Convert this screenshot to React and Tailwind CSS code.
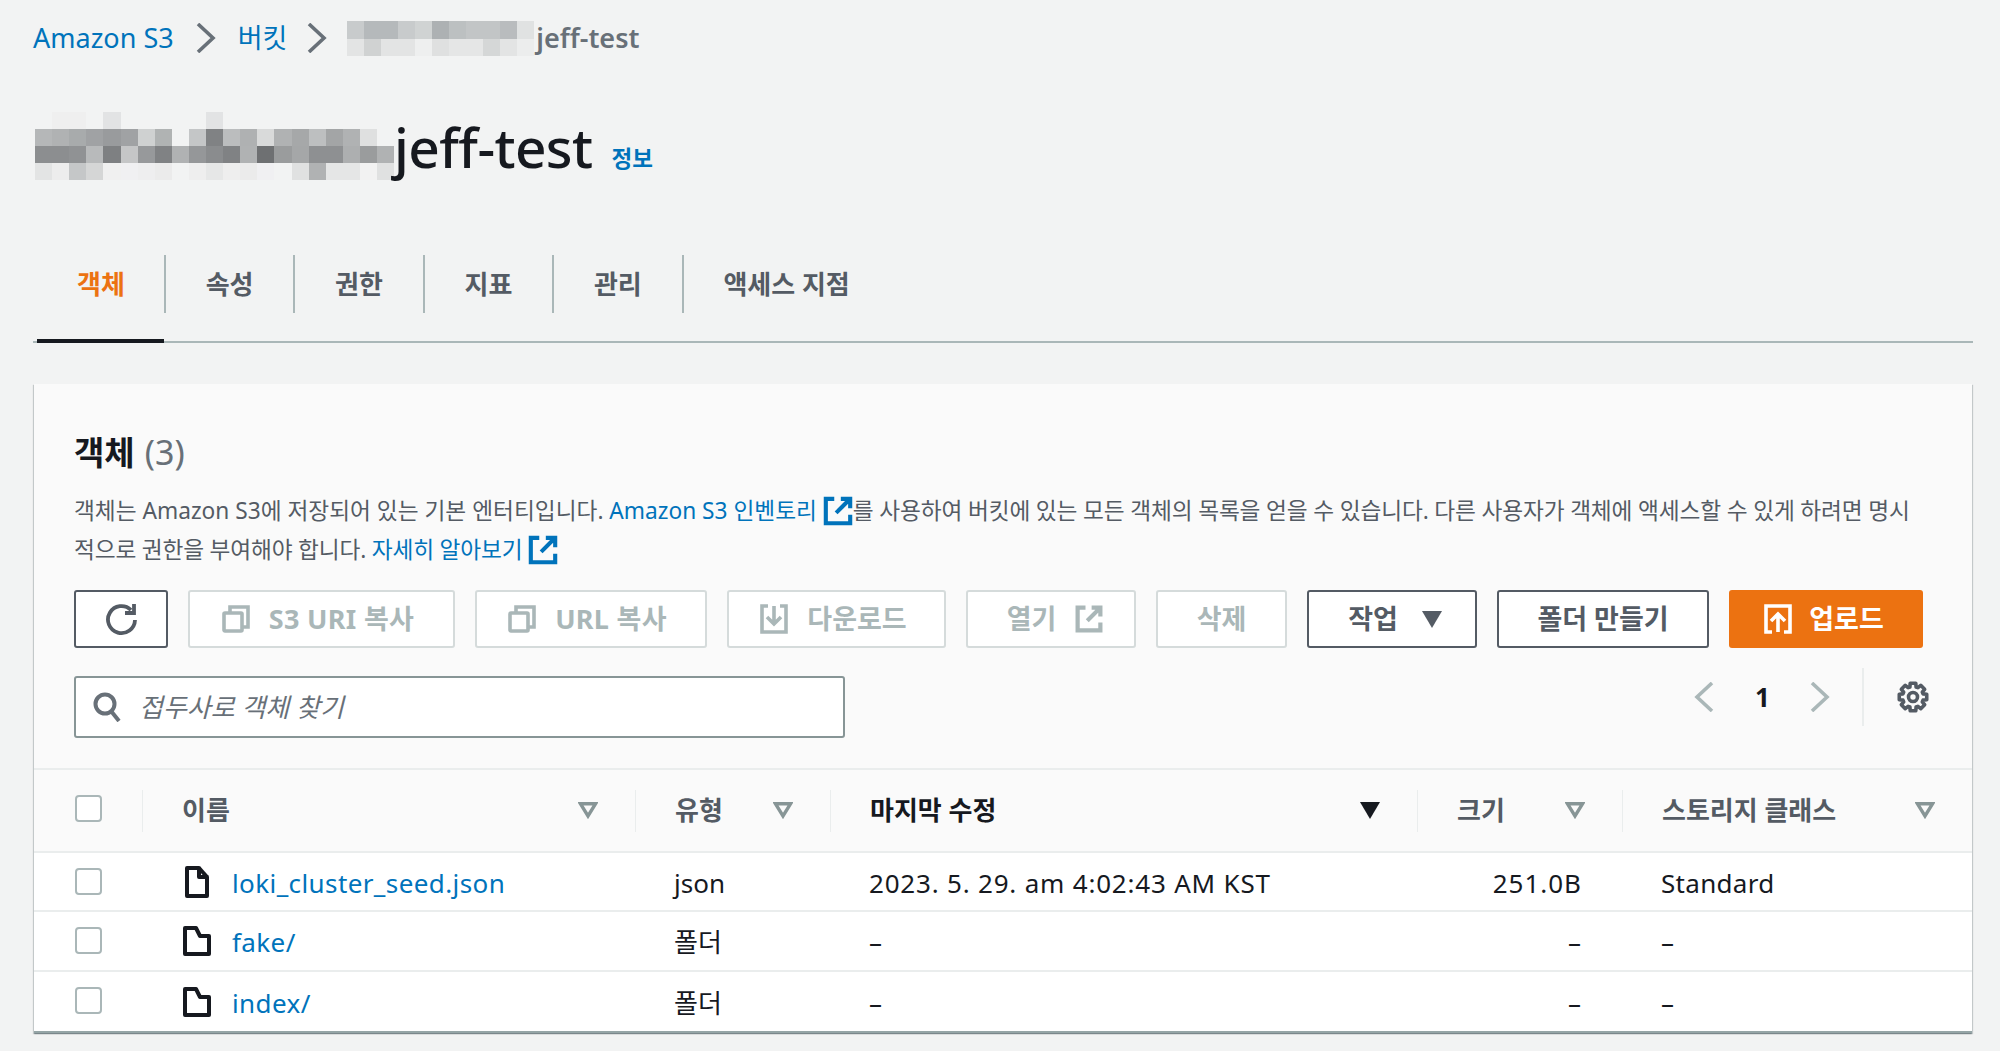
import React from 'react';

const crumbMosaic = [
  ['#c8cbcc', '#b5b9bb', '#b5b9bb', '#c8cbcc', '#d0d3d3', '#adb1b3', '#bcc0c1', '#c2c5c6', '#c2c5c6', '#b9bcbe', '#e0e2e2'],
  ['#e3e4e4', '#d0d2d2', '#e3e4e4', '#e3e4e4', '#eeefef', '#dfe0e0', '#e5e6e6', '#e5e6e6', '#d5d7d7', '#e3e4e4', '#eceded'],
];

const titleMosaic = [
  [null, '#efefef', '#efefef', null, '#e2e3e4', null, null, null, null, null, '#e2e3e4'],
  ['#b5b7b8', '#b0b2b3', '#a8abac', '#a0a2a4', '#999b9d', '#a0a2a4', '#cfd1d1', '#b0b3b3', null, '#c4c6c7', '#808284', '#bbbdbe', '#afb1b2', '#d9dada', '#b0b2b3', '#a6a8a9', '#bdbfc0', '#a3a5a6', '#b0b2b3', '#dfe0e0'],
  ['#8c8e90', '#8c8e90', '#909294', '#b8babb', '#7e8082', '#c5c6c7', '#97999b', '#808284', '#b0b2b3', '#959799', '#8a8c8e', '#808284', '#b0b2b3', '#6e7072', '#9a9c9d', '#a5a7a8', '#8e9092', '#8e9092', '#adafb0', '#9a9c9d', '#b0b2b3'],
  ['#e3e4e4', '#ededed', '#c5c7c8', '#d5d6d6', '#f0f0f0', '#f0f0f2', '#eeeeef', '#ebebeb', null, '#eeeeee', '#e6e7e7', '#eeeeee', '#ebebeb', '#f0f0f2', null, '#e0e1e1', '#b0b2b3', '#e5e6e6', '#e5e6e6', '#f2f2f2', '#e0e1e1'],
];

// redacted part of the bucket name, drawn as blocks
const Mosaic = ({ rows, cell, rowH, className }) => (
  <svg
    className={className}
    width={rows[rows.length - 1].length * cell}
    height={rows.length * rowH}
    shapeRendering="crispEdges"
  >
    {rows.map((row, y) =>
      row.map((c, x) =>
        c ? <rect key={`${x}-${y}`} x={x * cell} y={y * rowH} width={cell} height={rowH} fill={c} /> : null
      )
    )}
  </svg>
);

const Chevron = ({ left, color = '#687078', className }) => (
  <svg className={className} width="20" height="30" viewBox="0 0 20 30" fill="none" stroke={color} strokeWidth="3.6">
    <path d={left ? 'M18 1 3 15l15 14' : 'M2 1l15 14L2 29'} />
  </svg>
);

const ExternalIcon = ({ size = 30, color = '#0073bb', width = 2.2 }) => (
  <svg width={size} height={size} viewBox="0 0 16 16" fill="none" stroke={color} strokeWidth={width} className="shrink-0 inline-block align-[-7px]">
    <path d="M6 1.5H1.5v13h13V10" />
    <path d="M9.5 1.5h5v5M14.5 1.5 7 9" />
  </svg>
);

const CopyIcon = () => (
  <svg width="28" height="28" viewBox="0 0 28 28" fill="none" stroke="#aab7b8" strokeWidth="3.6" className="shrink-0">
    <path d="M8 7V2h18v20h-6" />
    <rect x="2" y="8" width="18" height="18" rx="1" />
  </svg>
);

const DownloadIcon = () => (
  <svg width="28" height="30" viewBox="0 0 28 30" fill="none" stroke="#aab7b8" strokeWidth="3.6" className="shrink-0">
    <path d="M8 2H2v26h24V2h-6" />
    <path d="M14 2v18M7 13l7 7 7-7" />
  </svg>
);

const UploadIcon = () => (
  <svg width="28" height="30" viewBox="0 0 28 30" fill="none" stroke="#ffffff" strokeWidth="3.6" className="shrink-0">
    <path d="M8 28H2V2h24v26h-6" />
    <path d="M14 28V10M7 17l7-7 7 7" />
  </svg>
);

const RefreshIcon = () => (
  <svg width="32" height="34" viewBox="0 0 32 34" fill="none" stroke="#545b64" strokeWidth="3.8">
    <path d="M26 8a13.5 13.5 0 1 0 4 10" />
    <path d="M29 2v9H20" />
  </svg>
);

const SearchIcon = () => (
  <svg width="28" height="30" viewBox="0 0 28 30" fill="none" stroke="#687078" strokeWidth="4">
    <circle cx="12" cy="12" r="9.5" />
    <path d="M18 19l8 10" />
  </svg>
);

// eight toothed outline for the preferences icon
const gearPath = () => {
  const pts = [];
  for (let i = 0; i < 8; i++) {
    const a = (i * Math.PI) / 4;
    [[-0.3, 10.5], [-0.2, 14], [0.2, 14], [0.3, 10.5]].forEach(([da, r]) => {
      pts.push(`${(16 + r * Math.sin(a + da)).toFixed(2)} ${(16 - r * Math.cos(a + da)).toFixed(2)}`);
    });
  }
  return `M${pts.join('L')}Z`;
};

const GearIcon = ({ className }) => (
  <svg width="32" height="32" viewBox="0 0 32 32" fill="none" stroke="#545b64" strokeWidth="3.6" strokeLinejoin="round" className={className}>
    <path d={gearPath()} />
    <circle cx="16" cy="16" r="4.5" />
  </svg>
);

const FileIcon = () => (
  <div className="w-[28px] flex justify-center shrink-0">
    <svg width="24" height="32" viewBox="0 0 24 32" fill="none" stroke="#16191f" strokeWidth="4" strokeLinejoin="round">
      <path d="M2 2h12v9h8v19H2z" />
      <path d="M14 2l8 9" />
    </svg>
  </div>
);

const FolderIcon = () => (
  <svg width="28" height="30" viewBox="0 0 28 30" fill="none" stroke="#16191f" strokeWidth="4" strokeLinejoin="round" className="shrink-0">
    <path d="M2 2h11l4 8h9v18H2z" />
  </svg>
);

const SortIcon = ({ active }) => (
  <svg width="20" height="17" viewBox="0 0 20 17" className="shrink-0">
    {active ? (
      <path d="M0 0h20L10 17z" fill="#16191f" />
    ) : (
      <path d="M2.5 1.8h15L10 14z" fill="none" stroke="#879596" strokeWidth="3.4" />
    )}
  </svg>
);

const Checkbox = ({ className = '' }) => (
  <div className={`w-[27px] h-[27px] rounded-[4px] border-2 border-[#aab7b8] bg-white shrink-0 ${className}`} />
);

const gridCols = 'grid grid-cols-[108px_493px_195px_587px_205px_1fr]';

const HeaderCell = ({ label, active, divider = true }) => (
  <div className={`h-[42px] flex items-center justify-between pl-[39px] pr-[37px] ${divider ? 'border-l border-[#eaeded]' : ''}`}>
    <span className={`text-[26px] font-semibold ${active ? 'text-[#16191f]' : 'text-[#545b64]'}`}>{label}</span>
    <SortIcon active={active} />
  </div>
);

const tabs = ['객체', '속성', '권한', '지표', '관리', '액세스 지점'];

const rows = [
  { name: 'loki_cluster_seed.json', type: 'json', date: '2023. 5. 29. am 4:02:43 AM KST', size: '251.0B', storage: 'Standard', file: true, h: 'h-[59px]' },
  { name: 'fake/', type: '폴더', date: '–', size: '–', storage: '–', h: 'h-[60px]' },
  { name: 'index/', type: '폴더', date: '–', size: '–', storage: '–', h: 'h-[59px]' },
];

const disabledBtn = 'h-[58px] flex items-center justify-center rounded-[3px] border-2 border-[#d5dbdb] bg-white text-[#aab7b8] text-[27px] font-bold';
const normalBtn = 'h-[58px] flex items-center justify-center rounded-[3px] border-2 border-[#545b64] bg-white text-[#545b64] text-[27px] font-bold';

export default function App() {
  return (
    <div className="min-h-[1051px] bg-[#f2f3f3] pl-[33px] pr-[27px] overflow-hidden text-[#16191f] font-['Noto_Sans','Noto_Sans_CJK_KR',sans-serif]">
      {/* breadcrumb */}
      <div className="pt-[19px] h-[57px] flex items-center text-[27px]">
        <span className="text-[#0073bb]">Amazon S3</span>
        <Chevron className="ml-[22px]" />
        <span className="text-[#0073bb] ml-[22px]">버킷</span>
        <Chevron className="ml-[20px]" />
        <Mosaic rows={crumbMosaic} cell={17} rowH={17.5} className="ml-[20px]" />
        <span className="ml-[2px] text-[#687078] font-semibold">jeff-test</span>
      </div>

      {/* title */}
      <div className="mt-[55px] h-[67px] flex items-center">
        <Mosaic rows={titleMosaic} cell={17.1} rowH={17} className="ml-[2px]" />
        <span className="mt-[2px] text-[55px] leading-none font-medium tracking-[-0.6px]">jeff-test</span>
        <span className="ml-[19px] mt-[26px] text-[22.5px] font-bold text-[#0073bb]">정보</span>
      </div>

      {/* tabs */}
      <div className="mt-[76px] h-[88px] border-b-2 border-[#aab7b8] pl-[4px] flex items-start">
        {tabs.map((t, i) => (
          <div key={t} className="relative h-[86px] flex">
            <div className={`h-[58px] flex items-center text-[26px] font-semibold ${i > 0 ? 'px-[39.8px] border-l-2 border-[#aab7b8] text-[#545b64]' : 'pl-[40px] pr-[39px] text-[#ec7211]'}`}>
              {t}
            </div>
            {i === 0 && <div className="absolute left-0 right-0 bottom-[-2px] h-[4px] bg-[#16191f]" />}
          </div>
        ))}
      </div>

      {/* objects card */}
      <div className="mt-[41px] mx-px bg-[#fafafa] shadow-[0_1px_1px_0_rgba(0,28,36,0.3),1px_1px_1px_0_rgba(0,28,36,0.15),-1px_1px_1px_0_rgba(0,28,36,0.15)] border-b-2 border-[#95a5a6]">
        <div className="px-[40px] pt-[46px] pb-[30px]">
          <div className="h-[44px] flex items-center text-[33px] leading-none">
            <span className="font-bold">객체</span>
            <span className="ml-[10px] text-[34px] text-[#687078]">(3)</span>
          </div>
          <div className="mt-[17px] text-[22.7px] leading-[39px] text-[#545b64] whitespace-nowrap">
            객체는 Amazon S3에 저장되어 있는 기본 엔터티입니다. <span className="text-[#0073bb]">Amazon S3 인벤토리 <ExternalIcon /></span>
            <span className="tracking-[-0.15px]">를 사용하여 버킷에 있는 모든 객체의 목록을 얻을 수 있습니다. 다른 사용자가 객체에 액세스할 수 있게 하려면 명시</span>
            <br />
            <span className="tracking-[-0.18px]">적으로 권한을 부여해야 합니다. <span className="text-[#0073bb]">자세히 알아보기 <ExternalIcon /></span></span>
          </div>

          {/* action buttons */}
          <div className="mt-[21px] flex gap-[20px]">
            <button className={`${normalBtn} w-[94px]`}><RefreshIcon /></button>
            <button className={`${disabledBtn} w-[267px] gap-[19px] pr-[7px] tracking-[0.3px]`}><CopyIcon />S3 URI 복사</button>
            <button className={`${disabledBtn} w-[232px] gap-[19px] pr-[7px] tracking-[0.3px]`}><CopyIcon />URL 복사</button>
            <button className={`${disabledBtn} w-[219px] gap-[19px] pr-[6px]`}><DownloadIcon />다운로드</button>
            <button className={`${disabledBtn} w-[170px] gap-[19px] pl-[8px]`}>열기<ExternalIcon color="#aab7b8" size={28} width={2.4} /></button>
            <button className={`${disabledBtn} w-[131px]`}>삭제</button>
            <button className={`${normalBtn} w-[170px] gap-[24px] pl-[6px]`}>
              작업
              <svg width="20" height="17" viewBox="0 0 20 17"><path d="M0 0h20L10 17z" fill="#545b64" /></svg>
            </button>
            <button className={`${normalBtn} w-[212px]`}>폴더 만들기</button>
            <button className="h-[58px] w-[194px] flex items-center justify-center gap-[17px] pr-[4px] rounded-[3px] bg-[#ec7211] text-white text-[27px] font-bold">
              <UploadIcon />업로드
            </button>
          </div>

          {/* search + pagination */}
          <div className="mt-[28px] flex justify-between items-start">
            <div className="w-[771px] h-[62px] flex items-center gap-[18px] pl-[17px] rounded-[3px] border-2 border-[#879596] bg-white">
              <SearchIcon />
              <span className="italic text-[26px] text-[#687078]">접두사로 객체 찾기</span>
            </div>
            <div className="-mt-[8px] h-[58px] mr-[3px] flex items-center">
              <Chevron left color="#aab7b8" />
              <span className="ml-[41px] w-[14px] text-center text-[26px] font-bold">1</span>
              <Chevron color="#aab7b8" className="ml-[41px]" />
              <div className="ml-[32px] h-[58px] border-l-2 border-[#eaeded]" />
              <GearIcon className="ml-[33px]" />
            </div>
          </div>
        </div>

        {/* table */}
        <div className={`${gridCols} h-[85px] items-center border-y-2 border-[#eaeded]`}>
          <div className="pl-[41px]"><Checkbox className="-mt-[5px]" /></div>
          <HeaderCell label="이름" />
          <HeaderCell label="유형" />
          <HeaderCell label="마지막 수정" active />
          <HeaderCell label="크기" />
          <HeaderCell label="스토리지 클래스" />
        </div>
        {rows.map((r, i) => (
          <div key={r.name} className={`${gridCols} ${r.h} items-center bg-white text-[26px] ${i < rows.length - 1 ? 'border-b-2 border-[#eaeded]' : ''}`}>
            <div className="pl-[41px]"><Checkbox className={i === 2 ? '-mt-[2px]' : i === 1 ? '-mt-[1px]' : ''} /></div>
            <div className="pl-[41px] flex items-center gap-[21px]">
              {r.file ? <FileIcon /> : <FolderIcon />}
              <span className="pt-[3px] text-[#0073bb] tracking-[0.4px]">{r.name}</span>
            </div>
            <div className="pl-[39px] pt-[3px]">{r.type}</div>
            <div className="pl-[39px] pt-[3px] tracking-[0.8px]">{r.date}</div>
            <div className="pr-[40px] pt-[3px] text-right tracking-[1px]">{r.size}</div>
            <div className="pl-[39px] pt-[3px] tracking-[0.3px]">{r.storage}</div>
          </div>
        ))}
      </div>
    </div>
  );
}
